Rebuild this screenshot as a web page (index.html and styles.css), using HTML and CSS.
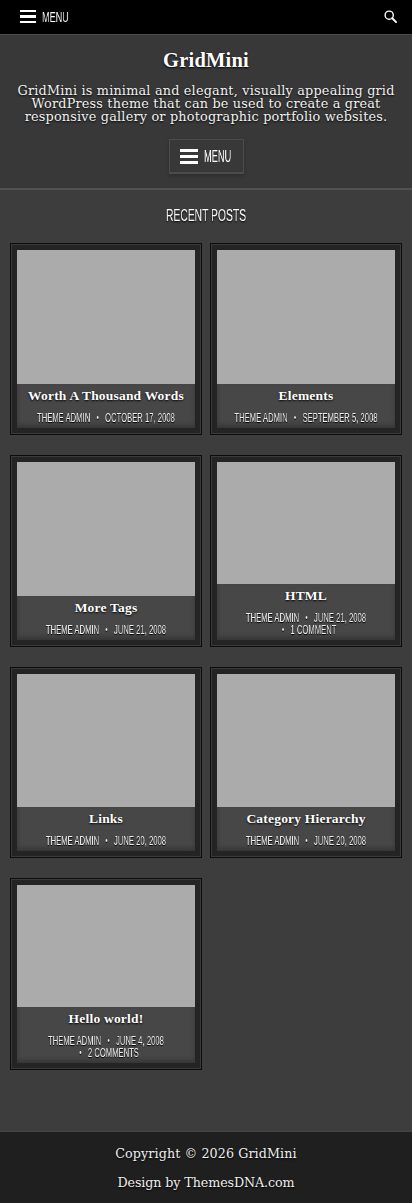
FILE: index.html
```html
<!DOCTYPE html>
<html lang="en">
<head>
<meta charset="utf-8">
<title>GridMini</title>
<link rel="stylesheet" href="styles.css">
</head>
<body>
<div class="topbar">
  <a class="top-menu"><span class="burger"><i></i><i></i><i></i></span><span class="menu-label">MENU</span></a>
  <svg class="search" viewBox="0 0 14 14" width="13" height="13"><circle cx="5.6" cy="5.6" r="4.4" fill="none" stroke="#fff" stroke-width="1.5"/><path d="M8.9 8.9 L13 13" stroke="#fff" stroke-width="2" stroke-linecap="round"/></svg>
</div>
<header class="site-header">
  <h1 class="site-title">GridMini</h1>
  <p class="site-desc">GridMini is minimal and elegant, visually appealing grid WordPress theme that can be used to create a great responsive gallery or photographic portfolio websites.</p>
  <a class="menu-btn"><span class="burger big"><i></i><i></i><i></i></span><span class="menu-label big-label">MENU</span></a>
</header>
<main class="content">
  <h2 class="section-title">RECENT POSTS</h2>
  <div class="grid">
    <article class="card"><div class="thumb"></div><div class="caption"><h3>Worth A Thousand Words</h3><p class="meta"><span>THEME ADMIN</span><span class="dot">•</span><span>OCTOBER 17, 2008</span></p></div></article>
    <article class="card"><div class="thumb"></div><div class="caption"><h3>Elements</h3><p class="meta"><span>THEME ADMIN</span><span class="dot">•</span><span>SEPTEMBER 5, 2008</span></p></div></article>
    <article class="card"><div class="thumb"></div><div class="caption"><h3>More Tags</h3><p class="meta"><span>THEME ADMIN</span><span class="dot">•</span><span>JUNE 21, 2008</span></p></div></article>
    <article class="card"><div class="thumb"></div><div class="caption"><h3>HTML</h3><p class="meta"><span>THEME ADMIN</span><span class="dot">•</span><span>JUNE 21, 2008</span><br><span class="dot">•</span><span>1 COMMENT</span></p></div></article>
    <article class="card"><div class="thumb"></div><div class="caption"><h3>Links</h3><p class="meta"><span>THEME ADMIN</span><span class="dot">•</span><span>JUNE 20, 2008</span></p></div></article>
    <article class="card"><div class="thumb"></div><div class="caption"><h3>Category Hierarchy</h3><p class="meta"><span>THEME ADMIN</span><span class="dot">•</span><span>JUNE 20, 2008</span></p></div></article>
    <article class="card"><div class="thumb"></div><div class="caption"><h3>Hello world!</h3><p class="meta"><span>THEME ADMIN</span><span class="dot">•</span><span>JUNE 4, 2008</span><br><span class="dot">•</span><span>2 COMMENTS</span></p></div></article>
  </div>
</main>
<footer class="site-footer">
  <p>Copyright © 2026 GridMini</p>
  <p class="credit">Design by ThemesDNA.com</p>
</footer>
</body>
</html>
```
FILE: styles.css
```css
* { box-sizing: border-box; }
html, body { margin: 0; padding: 0; }
body { width: 412px; height: 1203px; background: #3d3d3d; color: #fff; display: flex; flex-direction: column; font-family: "DejaVu Serif", serif; overflow: hidden; }
p, h1, h2, h3 { margin: 0; }
.topbar { height: 35px; background: #000; border-bottom: 1px solid #4a4a4a; display: flex; align-items: center; justify-content: space-between; padding: 0 15px 1px 20px; flex: none; }
.top-menu, .menu-btn { display: flex; align-items: center; }
.burger { display: flex; flex-direction: column; justify-content: space-between; width: 16px; height: 14px; margin-right: 6px; }
.burger i { display: block; height: 2.4px; background: #fff; }
.burger.big { width: 18px; height: 15px; margin-right: 6px; }
.burger.big i { height: 3px; }
.menu-label { font-family: "Liberation Sans", sans-serif; font-size: 14px; color: #fff; display: inline-block; transform: scaleX(.65); transform-origin: left center; width: 27px; white-space: nowrap; will-change: transform; }
.big-label { font-size: 16.5px; width: 28px; transform: scaleX(.56); }
.site-header { height: 155px; flex: none; background: #383838; border-bottom: 2px solid #505050; display: flex; flex-direction: column; align-items: center; padding-top: 13px; }
.site-title { font-family: "Liberation Serif", serif; font-size: 20.5px; line-height: 24px; font-weight: 700; color: #fff; letter-spacing: .2px; text-shadow: 0 1px 2px #000; }
.site-desc { font-size: 12.8px; line-height: 13px; letter-spacing: .2px; text-align: center; margin-top: 12px; padding: 0 16px; color: #f2f2f2; text-shadow: 0 1px 2px #000; }
.menu-btn { margin-top: 16px; width: 75px; height: 35px; border: 1px solid #4c4c4c; border-bottom-width: 2px; background: #383838; justify-content: center; box-shadow: 0 2px 3px #2e2e2e; }
.content { flex: 1; padding: 0 10px; }
.section-title { font-family: "Liberation Sans", sans-serif; font-weight: 400; font-size: 16px; line-height: 20px; text-align: center; margin-top: 16px; text-shadow: 0 1px 2px #000; transform: scaleX(.645); will-change: transform; }
.grid { display: grid; grid-template-columns: 192px 192px; gap: 20px 8px; grid-auto-rows: 191.75px; margin-top: 17px; }
.card { display: flex; flex-direction: column; padding: 6px; background: #242424; border: 1px solid #0c0c0c; outline: 1px solid #3a3a3a; outline-offset: -2px; overflow: hidden; }
.thumb { flex: 1; min-height: 0; background: #ababab; }
.caption { flex: none; background: #474747; padding: 4px 4px 4px; text-align: center; box-shadow: inset 0 -3px 4px #363636; }
.caption h3 { font-family: "Liberation Serif", serif; font-size: 13.5px; line-height: 15px; letter-spacing: .2px; font-weight: 700; color: #fff; text-shadow: 0 1px 2px #000; }
.meta { font-family: "Liberation Sans", sans-serif; font-size: 12px; line-height: 12px; letter-spacing: .1px; color: #eee; margin-top: 9px; text-shadow: 0 1px 1px #000; width: 158.7%; white-space: nowrap; transform: scaleX(.63); transform-origin: left center; will-change: transform; }
.dot { font-size: 10px; line-height: 0; margin: 0 10px; vertical-align: 1px; }
.site-footer { height: 72px; flex: none; background: #1f1f1f; border-top: 1px solid #454545; text-align: center; font-size: 12.7px; padding-top: 14px; color: #eee; text-shadow: 0 1px 2px #000; }
.site-footer p { line-height: 16px; margin-bottom: 13px; letter-spacing: .1px; }
.site-footer .credit { letter-spacing: -.1px; }
```
